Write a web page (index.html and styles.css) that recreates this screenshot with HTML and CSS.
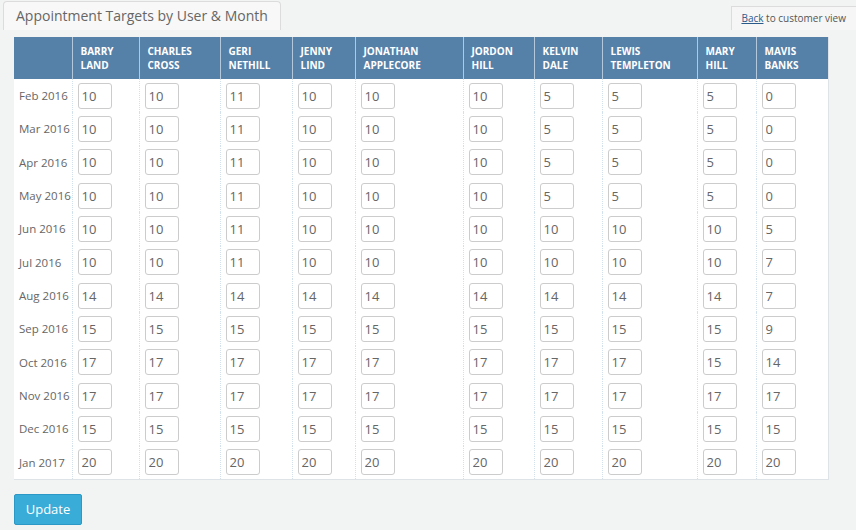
FILE: index.html
```html
<!DOCTYPE html>
<html>
<head>
  <meta charset="utf-8">
  <title>Appointment Targets</title>
<link rel="stylesheet" href="styles.css">
</head>
<body>
<div class="top-bar">
  <div class="page-tab">Appointment Targets by User &amp; Month</div>
  <div class="back-link"><a href="#">Back</a> to customer view</div>
</div>

<div class="panel">
  <table class="targets">
    <colgroup>
      <col style="width:58px"><col style="width:67px"><col style="width:81px"><col style="width:72px">
      <col style="width:63px"><col style="width:108px"><col style="width:71px"><col style="width:68px">
      <col style="width:95px"><col style="width:59px"><col style="width:72px">
    </colgroup>
    <thead>
      <tr>
        <th></th>
        <th>Barry<br>Land</th>
        <th>Charles<br>Cross</th>
        <th>Geri<br>Nethill</th>
        <th>Jenny<br>Lind</th>
        <th>Jonathan<br>Applecore</th>
        <th>Jordon<br>Hill</th>
        <th>Kelvin<br>Dale</th>
        <th>Lewis<br>Templeton</th>
        <th>Mary<br>Hill</th>
        <th>Mavis<br>Banks</th>
      </tr>
    </thead>
    <tbody>
      <tr><td class="month">Feb 2016</td><td><input value="10"></td><td><input value="10"></td><td><input value="11"></td><td><input value="10"></td><td><input value="10"></td><td><input value="10"></td><td><input value="5"></td><td><input value="5"></td><td><input value="5"></td><td><input value="0"></td></tr>
      <tr><td class="month">Mar 2016</td><td><input value="10"></td><td><input value="10"></td><td><input value="11"></td><td><input value="10"></td><td><input value="10"></td><td><input value="10"></td><td><input value="5"></td><td><input value="5"></td><td><input value="5"></td><td><input value="0"></td></tr>
      <tr><td class="month">Apr 2016</td><td><input value="10"></td><td><input value="10"></td><td><input value="11"></td><td><input value="10"></td><td><input value="10"></td><td><input value="10"></td><td><input value="5"></td><td><input value="5"></td><td><input value="5"></td><td><input value="0"></td></tr>
      <tr><td class="month">May 2016</td><td><input value="10"></td><td><input value="10"></td><td><input value="11"></td><td><input value="10"></td><td><input value="10"></td><td><input value="10"></td><td><input value="5"></td><td><input value="5"></td><td><input value="5"></td><td><input value="0"></td></tr>
      <tr><td class="month">Jun 2016</td><td><input value="10"></td><td><input value="10"></td><td><input value="11"></td><td><input value="10"></td><td><input value="10"></td><td><input value="10"></td><td><input value="10"></td><td><input value="10"></td><td><input value="10"></td><td><input value="5"></td></tr>
      <tr><td class="month">Jul 2016</td><td><input value="10"></td><td><input value="10"></td><td><input value="11"></td><td><input value="10"></td><td><input value="10"></td><td><input value="10"></td><td><input value="10"></td><td><input value="10"></td><td><input value="10"></td><td><input value="7"></td></tr>
      <tr><td class="month">Aug 2016</td><td><input value="14"></td><td><input value="14"></td><td><input value="14"></td><td><input value="14"></td><td><input value="14"></td><td><input value="14"></td><td><input value="14"></td><td><input value="14"></td><td><input value="14"></td><td><input value="7"></td></tr>
      <tr><td class="month">Sep 2016</td><td><input value="15"></td><td><input value="15"></td><td><input value="15"></td><td><input value="15"></td><td><input value="15"></td><td><input value="15"></td><td><input value="15"></td><td><input value="15"></td><td><input value="15"></td><td><input value="9"></td></tr>
      <tr><td class="month">Oct 2016</td><td><input value="17"></td><td><input value="17"></td><td><input value="17"></td><td><input value="17"></td><td><input value="17"></td><td><input value="17"></td><td><input value="17"></td><td><input value="17"></td><td><input value="15"></td><td><input value="14"></td></tr>
      <tr><td class="month">Nov 2016</td><td><input value="17"></td><td><input value="17"></td><td><input value="17"></td><td><input value="17"></td><td><input value="17"></td><td><input value="17"></td><td><input value="17"></td><td><input value="17"></td><td><input value="17"></td><td><input value="17"></td></tr>
      <tr><td class="month">Dec 2016</td><td><input value="15"></td><td><input value="15"></td><td><input value="15"></td><td><input value="15"></td><td><input value="15"></td><td><input value="15"></td><td><input value="15"></td><td><input value="15"></td><td><input value="15"></td><td><input value="15"></td></tr>
      <tr><td class="month">Jan 2017</td><td><input value="20"></td><td><input value="20"></td><td><input value="20"></td><td><input value="20"></td><td><input value="20"></td><td><input value="20"></td><td><input value="20"></td><td><input value="20"></td><td><input value="20"></td><td><input value="20"></td></tr>
    </tbody>
  </table>

  <button class="update-btn">Update</button>
</div>
</body>
</html>
```

FILE: styles.css
```css
body {
  margin: 0;
  background: #f2f3f3;
  font-family: 'Open Sans', sans-serif;
  color: #666;
}

.top-bar {
  display: flex;
  justify-content: space-between;
  align-items: flex-end;
  padding: 1px 0 0 3px;
}

.page-tab {
  height: 28px;
  line-height: 28px;
  padding: 0 12px;
  background: #f8f8f8;
  border: 1px solid #dcdcdc;
  border-bottom: none;
  border-radius: 4px 4px 0 0;
  font-size: 14px;
  color: #666;
}

.back-link {
  height: 23px;
  line-height: 23px;
  padding: 0 10px 0 9px;
  background: #f6f6f6;
  border: 1px solid #dcdcdc;
  border-right: none;
  border-bottom: none;
  font-size: 10px;
  color: #555;
}

.back-link a {
  color: #2a5a8c;
  text-decoration: underline;
}

.panel {
  padding: 7px 14px 0 14px;
}

.targets {
  width: 814px;
  table-layout: fixed;
  border-collapse: collapse;
  background: #fff;
  border: 1px solid #dde3e6;
  border-top: none;
  border-left: none;
}

.targets th {
  background: #5580a8;
  color: #fff;
  font-size: 10px;
  font-weight: bold;
  text-transform: uppercase;
  text-align: left;
  line-height: 14px;
  padding: 7px 8px;
  border-left: 1px solid #b4c8db;
  vertical-align: top;
}

.targets th:first-child {
  border-left: none;
}

.targets td {
  height: 33.33px;
  padding: 0 6px 0 5px;
  border-left: 1px dotted #d3e1ec;
  vertical-align: middle;
}

.targets td.month {
  padding-left: 5px;
  border-left: none;
  font-size: 11.5px;
  color: #666;
  white-space: nowrap;
}

.targets input {
  box-sizing: border-box;
  width: 34px;
  height: 26px;
  padding: 0 3px;
  border: 1px solid #ccc;
  border-radius: 3px;
  font-family: 'Open Sans', sans-serif;
  font-size: 13px;
  color: #666;
  display: block;
}

.update-btn {
  margin-top: 14px;
  width: 68px;
  height: 31px;
  background: #3aacd8;
  border: 1px solid #2b98c5;
  border-radius: 2px;
  color: #fff;
  font-family: 'Open Sans', sans-serif;
  font-size: 13px;
  cursor: pointer;
}
```
